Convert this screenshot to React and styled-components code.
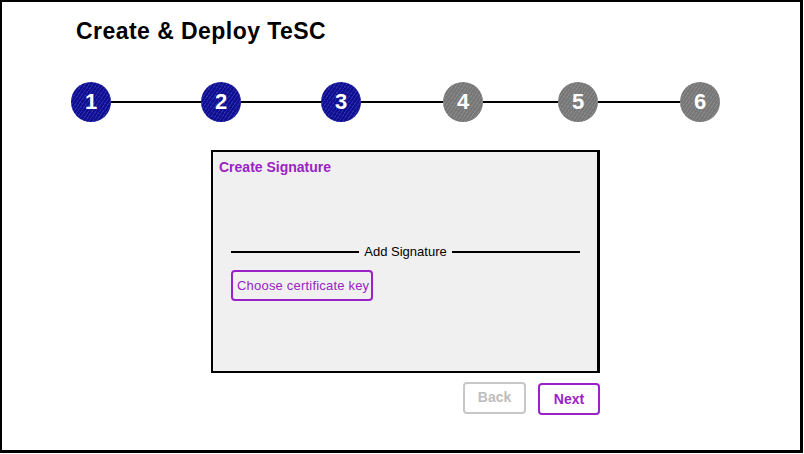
import React from "react";
import styled, { createGlobalStyle } from "styled-components";

const Global = createGlobalStyle`
  html, body { margin: 0; padding: 0; background: #fff; }
  body { font-family: "Liberation Sans", Arial, sans-serif; }
`;

const PURPLE = "#9a22c6";

const Frame = styled.div`
  box-sizing: border-box;
  width: 803px;
  height: 453px;
  border-style: solid;
  border-color: #000;
  border-width: 2px 3px 3px 2px;
  overflow: hidden;
`;

const Title = styled.h1`
  margin: 0;
  padding: 17px 0 0 74px;
  height: 24px;
  font-size: 23px;
  line-height: 24px;
  letter-spacing: 0.45px;
  font-weight: 700;
  color: #000;
`;

const Stepper = styled.div`
  display: flex;
  align-items: center;
  margin: 39px 0 0 69px;
  height: 40px;
`;

const Circle = styled.div`
  flex: none;
  width: 40px;
  height: 40px;
  border-radius: 50%;
  display: flex;
  align-items: center;
  justify-content: center;
  color: #fff;
  font-size: 22px;
  font-weight: 700;
  background-color: ${(p) => (p.$done ? "#0e0e94" : "#777777")};
  background-image: repeating-linear-gradient(
    -55deg,
    rgba(255, 255, 255, 0.12) 0px,
    rgba(255, 255, 255, 0.12) 1px,
    transparent 1px,
    transparent 3px
  );
`;

const Connector = styled.div`
  flex: none;
  width: ${(p) => p.$w}px;
  height: 2px;
  background: #000;
`;

const Content = styled.div`
  width: 389px;
  margin: 28px 0 0 209px;
  display: flex;
  flex-direction: column;
`;

const Panel = styled.section`
  box-sizing: border-box;
  height: 223px;
  background: #f0f0f0;
  border-style: solid;
  border-color: #000;
  border-width: 2px 3px 2px 2px;
  padding: 7px 6px 0 6px;
  display: flex;
  flex-direction: column;
`;

const PanelTitle = styled.div`
  font-size: 14px;
  line-height: 16px;
  font-weight: 700;
  color: ${PURPLE};
`;

const Divider = styled.div`
  display: flex;
  align-items: center;
  gap: 5px;
  margin: 69px 11px 0 12px;
  font-size: 13px;
  line-height: 15px;
  color: #000;
  &::before, &::after {
    content: "";
    flex: 1;
    height: 2px;
    background: #000;
  }
`;

const KeyButton = styled.button`
  align-self: flex-start;
  box-sizing: border-box;
  margin: 11px 0 0 12px;
  width: 142px;
  height: 31px;
  padding: 0 4px;
  text-align: left;
  background: transparent;
  border: 2px solid ${PURPLE};
  border-radius: 4px;
  font-family: "Liberation Sans", Arial, sans-serif;
  font-size: 13px;
  letter-spacing: 0.2px;
  color: ${PURPLE};
  white-space: nowrap;
`;

const Actions = styled.div`
  display: flex;
  justify-content: flex-end;
  gap: 12px;
  margin-top: 9px;
`;

const NavButton = styled.button`
  box-sizing: border-box;
  width: ${(p) => p.$w}px;
  height: 32px;
  background: #fff;
  border: 2px solid ${(p) => (p.$disabled ? "#c8c8c8" : PURPLE)};
  border-radius: 4px;
  font-family: "Liberation Sans", Arial, sans-serif;
  font-size: 14px;
  font-weight: 700;
  color: ${(p) => (p.$disabled ? "#bdbdbd" : PURPLE)};
  padding: 0 0 ${(p) => (p.$disabled ? 2 : 0)}px;
  margin-top: ${(p) => p.$dy || 0}px;
`;

const steps = [
  { n: 1, done: true },
  { n: 2, done: true, gap: 90 },
  { n: 3, done: true, gap: 80 },
  { n: 4, done: false, gap: 82 },
  { n: 5, done: false, gap: 75 },
  { n: 6, done: false, gap: 82 },
];

export default function App() {
  return (
    <>
      <Global />
      <Frame>
        <Title>Create &amp; Deploy TeSC</Title>
        <Stepper>
          {steps.map((s) => (
            <React.Fragment key={s.n}>
              {s.gap && <Connector $w={s.gap} />}
              <Circle $done={s.done}>{s.n}</Circle>
            </React.Fragment>
          ))}
        </Stepper>
        <Content>
          <Panel>
            <PanelTitle>Create Signature</PanelTitle>
            <Divider>Add Signature</Divider>
            <KeyButton>Choose certificate key</KeyButton>
          </Panel>
          <Actions>
            <NavButton $w={63} $disabled>Back</NavButton>
            <NavButton $w={62} $dy={1}>Next</NavButton>
          </Actions>
        </Content>
      </Frame>
    </>
  );
}
